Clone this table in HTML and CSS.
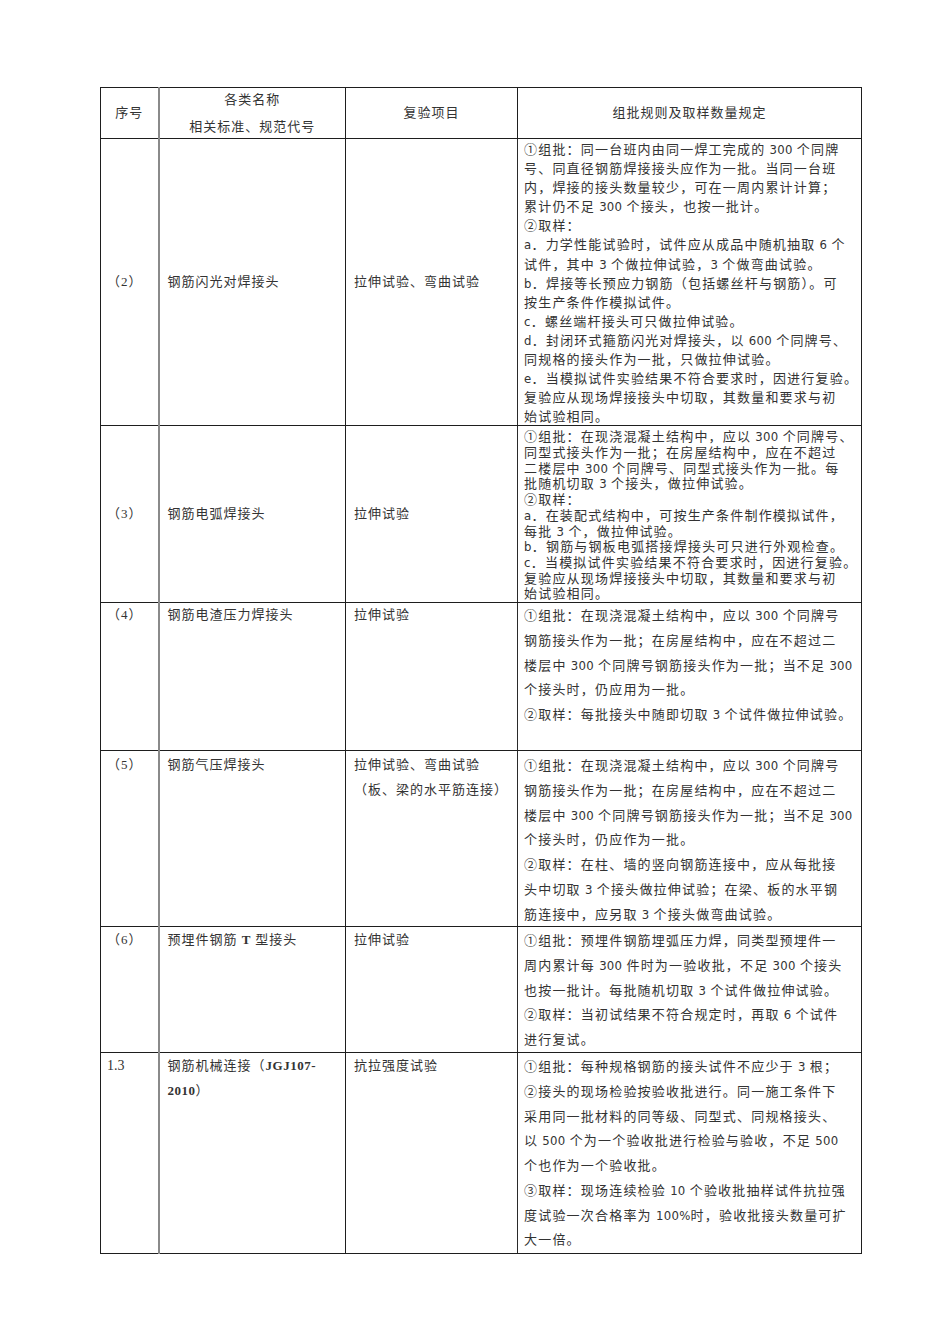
FILE: index.html
```html
<!DOCTYPE html>
<html lang="zh-CN">
<head>
<meta charset="utf-8">
<title>钢筋连接复验规定</title>
<link rel="stylesheet" href="styles.css">
</head>
<body>
<div class="page">
<table class="spec">
  <colgroup>
    <col class="w1"><col class="w2"><col class="w3"><col class="w4">
  </colgroup>
  <thead>
    <tr class="h-head">
      <th class="c1">序号</th>
      <th class="c2"><span class="hl">各类名称</span><span class="hl">相关标准、规范代号</span></th>
      <th class="c3">复验项目</th>
      <th class="c4">组批规则及取样数量规定</th>
    </tr>
  </thead>
  <tbody>
    <tr class="h-r2">
      <td class="c1 mid">（2）</td>
      <td class="c2 mid">钢筋闪光对焊接头</td>
      <td class="c3 mid">拉伸试验、弯曲试验</td>
      <td class="c4 rule lh19">
        <span class="ln">①组批：同一台班内由同一焊工完成的 <span class="n">300</span> 个同牌</span>
        <span class="ln">号、同直径钢筋焊接接头应作为一批。当同一台班</span>
        <span class="ln">内，焊接的接头数量较少，可在一周内累计计算；</span>
        <span class="ln">累计仍不足 <span class="n">300</span> 个接头，也按一批计。</span>
        <span class="ln">②取样：</span>
        <span class="ln"><span class="n">a</span>．力学性能试验时，试件应从成品中随机抽取 <span class="n">6</span> 个</span>
        <span class="ln">试件，其中 <span class="n">3</span> 个做拉伸试验，<span class="n">3</span> 个做弯曲试验。</span>
        <span class="ln"><span class="n">b</span>．焊接等长预应力钢筋（包括螺丝杆与钢筋）。可</span>
        <span class="ln">按生产条件作模拟试件。</span>
        <span class="ln"><span class="n">c</span>．螺丝端杆接头可只做拉伸试验。</span>
        <span class="ln"><span class="n">d</span>．封闭环式箍筋闪光对焊接头，以 <span class="n">600</span> 个同牌号、</span>
        <span class="ln">同规格的接头作为一批，只做拉伸试验。</span>
        <span class="ln"><span class="n">e</span>．当模拟试件实验结果不符合要求时，因进行复验。</span>
        <span class="ln">复验应从现场焊接接头中切取，其数量和要求与初</span>
        <span class="ln">始试验相同。</span>
      </td>
    </tr>
    <tr class="h-r3">
      <td class="c1 mid">（3）</td>
      <td class="c2 mid">钢筋电弧焊接头</td>
      <td class="c3 mid">拉伸试验</td>
      <td class="c4 rule lh15">
        <span class="ln">①组批：在现浇混凝土结构中，应以 <span class="n">300</span> 个同牌号、</span>
        <span class="ln">同型式接头作为一批；在房屋结构中，应在不超过</span>
        <span class="ln">二楼层中 <span class="n">300</span> 个同牌号、同型式接头作为一批。每</span>
        <span class="ln">批随机切取 <span class="n">3</span> 个接头，做拉伸试验。</span>
        <span class="ln">②取样：</span>
        <span class="ln"><span class="n">a</span>．在装配式结构中，可按生产条件制作模拟试件，</span>
        <span class="ln">每批 <span class="n">3</span> 个，做拉伸试验。</span>
        <span class="ln"><span class="n">b</span>．钢筋与钢板电弧搭接焊接头可只进行外观检查。</span>
        <span class="ln"><span class="n">c</span>．当模拟试件实验结果不符合要求时，因进行复验。</span>
        <span class="ln">复验应从现场焊接接头中切取，其数量和要求与初</span>
        <span class="ln">始试验相同。</span>
      </td>
    </tr>
    <tr class="h-r4 top">
      <td class="c1">（4）</td>
      <td class="c2">钢筋电渣压力焊接头</td>
      <td class="c3">拉伸试验</td>
      <td class="c4 rule lh25">
        <span class="ln">①组批：在现浇混凝土结构中，应以 <span class="n">300</span> 个同牌号</span>
        <span class="ln">钢筋接头作为一批；在房屋结构中，应在不超过二</span>
        <span class="ln">楼层中 <span class="n">300</span> 个同牌号钢筋接头作为一批；当不足 <span class="n">300</span></span>
        <span class="ln">个接头时，仍应用为一批。</span>
        <span class="ln">②取样：每批接头中随即切取 <span class="n">3</span> 个试件做拉伸试验。</span>
      </td>
    </tr>
    <tr class="h-r5 top pad2">
      <td class="c1">（5）</td>
      <td class="c2">钢筋气压焊接头</td>
      <td class="c3"><span class="ln">拉伸试验、弯曲试验</span><span class="ln">（板、梁的水平筋连接）</span></td>
      <td class="c4 rule lh25">
        <span class="ln">①组批：在现浇混凝土结构中，应以 <span class="n">300</span> 个同牌号</span>
        <span class="ln">钢筋接头作为一批；在房屋结构中，应在不超过二</span>
        <span class="ln">楼层中 <span class="n">300</span> 个同牌号钢筋接头作为一批；当不足 <span class="n">300</span></span>
        <span class="ln">个接头时，仍应作为一批。</span>
        <span class="ln">②取样：在柱、墙的竖向钢筋连接中，应从每批接</span>
        <span class="ln">头中切取 <span class="n">3</span> 个接头做拉伸试验；在梁、板的水平钢</span>
        <span class="ln">筋连接中，应另取 <span class="n">3</span> 个接头做弯曲试验。</span>
      </td>
    </tr>
    <tr class="h-r6 top pad1">
      <td class="c1">（6）</td>
      <td class="c2">预埋件钢筋 <span class="lat">T</span> 型接头</td>
      <td class="c3">拉伸试验</td>
      <td class="c4 rule lh25">
        <span class="ln">①组批：预埋件钢筋埋弧压力焊，同类型预埋件一</span>
        <span class="ln">周内累计每 <span class="n">300</span> 件时为一验收批，不足 <span class="n">300</span> 个接头</span>
        <span class="ln">也按一批计。每批随机切取 <span class="n">3</span> 个试件做拉伸试验。</span>
        <span class="ln">②取样：当初试结果不符合规定时，再取 <span class="n">6</span> 个试件</span>
        <span class="ln">进行复试。</span>
      </td>
    </tr>
    <tr class="h-r7 top pad1">
      <td class="c1 num">1.3</td>
      <td class="c2"><span class="ln">钢筋机械连接（<span class="lat">JGJ107-</span></span><span class="ln"><span class="lat">2010</span>）</span></td>
      <td class="c3">抗拉强度试验</td>
      <td class="c4 rule lh25">
        <span class="ln">①组批：每种规格钢筋的接头试件不应少于 <span class="n">3</span> 根；</span>
        <span class="ln">②接头的现场检验按验收批进行。同一施工条件下</span>
        <span class="ln">采用同一批材料的同等级、同型式、同规格接头、</span>
        <span class="ln">以 <span class="n">500</span> 个为一个验收批进行检验与验收，不足 <span class="n">500</span></span>
        <span class="ln">个也作为一个验收批。</span>
        <span class="ln">③取样：现场连续检验 <span class="n">10</span> 个验收批抽样试件抗拉强</span>
        <span class="ln">度试验一次合格率为 <span class="n">100%</span>时，验收批接头数量可扩</span>
        <span class="ln">大一倍。</span>
      </td>
    </tr>
  </tbody>
</table>
</div>
</body>
</html>
```

FILE: styles.css
```css
html, body {
  margin: 0;
  padding: 0;
  background: #ffffff;
}

.page {
  padding: 87px 0 0 100px;
}

.spec {
  border-collapse: collapse;
  table-layout: fixed;
  width: 761px;
  color: #333333;
  font-family: "Liberation Serif", "Noto Sans CJK SC", serif;
  font-size: 13px;
  letter-spacing: 1px;
}

.w1 { width: 58px; }
.w2 { width: 187px; }
.w3 { width: 172px; }
.w4 { width: 344px; }

.spec th,
.spec td {
  border: 1px solid #1e1e1e;
  padding: 0;
}

.spec th {
  font-weight: normal;
  text-align: center;
  vertical-align: middle;
  line-height: 20px;
}

.spec th.c1,
.spec td.c1 {
  border-right: 2px solid #8a8a8a;
}

.spec td.c1 {
  padding-left: 6px;
  line-height: 24.7px;
}

.spec td.c2,
.spec td.c3 {
  padding-left: 8px;
  line-height: 24.7px;
}

.spec td.c3 {
  border-right: 1px solid #2a2a2a;
}

.hl {
  display: block;
}

.hl + .hl {
  margin-top: 7px;
}

.ln {
  display: block;
  white-space: nowrap;
  overflow: visible;
}

.mid {
  vertical-align: middle;
}

.top td {
  vertical-align: top;
  padding-top: 0;
}

.pad2 td {
  padding-top: 2px;
}

.pad1 td {
  padding-top: 1px;
}

.rule {
  padding-left: 6px !important;
  font-family: "Noto Sans CJK SC", sans-serif;
  letter-spacing: 1.2px;
}

.rule .ln {
  height: var(--lh);
  line-height: var(--lh);
}

.n {
  font-family: "DejaVu Sans Condensed", "DejaVu Sans", "Liberation Sans", sans-serif;
  font-stretch: condensed;
  letter-spacing: 0.3px;
  line-height: 1;
}

.lat {
  font-family: "Liberation Serif", serif;
  font-weight: bold;
  letter-spacing: 0.5px;
  line-height: 1;
}

.lh19 {
  --lh: 19.1px;
  vertical-align: top;
}

.lh15 {
  --lh: 15.7px;
  vertical-align: top;
  padding-top: 2px !important;
}

.lh25 {
  --lh: 24.7px;
}

.num {
  font-family: "Liberation Serif", serif;
  font-size: 14px;
  letter-spacing: 0;
}

.h-head { height: 51px; }
.h-r2 { height: 287px; }
.h-r3 { height: 177px; }
.h-r4 { height: 148px; }
.h-r5 { height: 176px; }
.h-r6 { height: 126px; }
.h-r7 { height: 201px; }
```
